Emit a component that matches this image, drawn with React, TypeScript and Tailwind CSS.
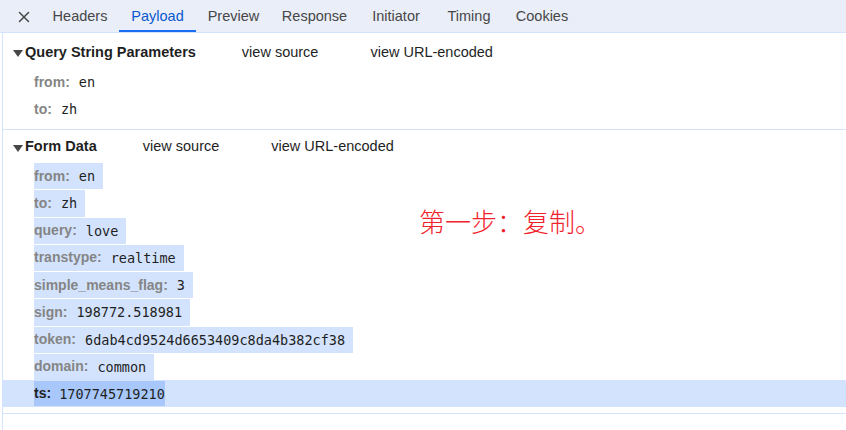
import { X } from 'lucide-react';

// tab widths taken from the reference strip
const tabs = [
  { label: 'Headers', w: 'w-[78px]' },
  { label: 'Payload', w: 'w-[77px]' },
  { label: 'Preview', w: 'w-[75px]' },
  { label: 'Response', w: 'w-[87px]' },
  { label: 'Initiator', w: 'w-[76px]' },
  { label: 'Timing', w: 'w-[70px]' },
  { label: 'Cookies', w: 'w-[76px]' },
];

const query = [
  ['from', 'en'],
  ['to', 'zh'],
];

const form = [
  ['from', 'en'],
  ['to', 'zh'],
  ['query', 'love'],
  ['transtype', 'realtime'],
  ['simple_means_flag', '3'],
  ['sign', '198772.518981'],
  ['token', '6dab4cd9524d6653409c8da4b382cf38'],
  ['domain', 'common'],
];

const sans = "font-['Liberation_Sans',Arial,sans-serif]";
const mono = "font-['DejaVu_Sans_Mono',monospace]";

const Caret = () => (
  <svg width="10" height="8" viewBox="0 0 10 8" className="mr-[2px] mt-[1px]">
    <path d="M0 1 L10 1 L5 8 Z" fill="#474747" />
  </svg>
);

const SectionHeader = ({ title, height }: { title: string; height: string }) => (
  <div className={`flex items-center pl-[10px] ${height} text-[14.5px] text-[#1f1f1f]`}>
    <Caret />
    <span className="font-bold">{title}</span>
    <span className="ml-[46px]">view source</span>
    <span className="ml-[52px]">view URL-encoded</span>
  </div>
);

export default function App() {
  return (
    <div className={`relative w-[846px] h-[430px] overflow-hidden bg-white ${sans}`}>
      {/* Tab strip */}
      <div className="flex h-[33px] items-stretch border-b border-[#d3e3fd] bg-[#e9eef8] text-[14.5px] text-[#474747]">
        <div className="flex w-[41px] items-center justify-center pl-[6px] pt-[1px]">
          <X size={18} strokeWidth={2} color="#474747" />
        </div>
        {tabs.map((t) => (
          <div
            key={t.label}
            className={
              t.label === 'Payload'
                ? `flex ${t.w} items-center justify-center border-b-2 border-[#1a6cf0] pt-[3px] text-[#0b57d0]`
                : `flex ${t.w} items-center justify-center pt-[1px]`
            }
          >
            {t.label}
          </div>
        ))}
      </div>

      <div className="ml-[2px] h-full border-l border-[#d3e3fd]">
        {/* Query String Parameters */}
        <div className="border-b border-[#d3e3fd] pb-[6px]">
          <SectionHeader title="Query String Parameters" height="h-[36px] pt-[3px]" />
          {query.map(([k, v]) => (
            <div key={k} className="flex h-[27px] items-center pl-[31px] text-[14px]">
              <span className="font-bold text-[#858585]">{k}:</span>
              <span className={`ml-[9px] text-[13.5px] text-[#1f1f1f] ${mono}`}>{v}</span>
            </div>
          ))}
        </div>

        {/* Form Data */}
        <div className="border-b border-[#d3e3fd] pb-[6px]">
          <SectionHeader title="Form Data" height="h-[32px] pt-[2px]" />
          {form.map(([k, v]) => (
            <div key={k} className="flex h-[27.25px] items-stretch pl-[31px] pt-[1px] text-[14px]">
              <div className="flex items-center bg-[#d3e3fd] pr-[8px]">
                <span className="font-bold text-[#858585]">{k}:</span>
                <span className={`ml-[9px] text-[13.5px] text-[#1f1f1f] ${mono}`}>{v}</span>
              </div>
            </div>
          ))}
          <div className="flex h-[27.25px] items-stretch bg-[#d3e3fd] pl-[31px] text-[14px]">
            <div className="my-[1px] flex items-center bg-[#a8c7fa]">
              <span className="font-bold text-[#1f1f1f]">ts:</span>
              <span className={`ml-[8px] text-[13.5px] text-[#1f1f1f] ${mono}`}>1707745719210</span>
            </div>
          </div>
        </div>
      </div>

      {/* Annotation */}
      <div className="absolute left-[419px] top-[206px] text-[26px] leading-[30px] text-[#f0222c] font-['Noto_Sans_CJK_SC',sans-serif] font-light">
        第一步：复制。
      </div>
    </div>
  );
}
